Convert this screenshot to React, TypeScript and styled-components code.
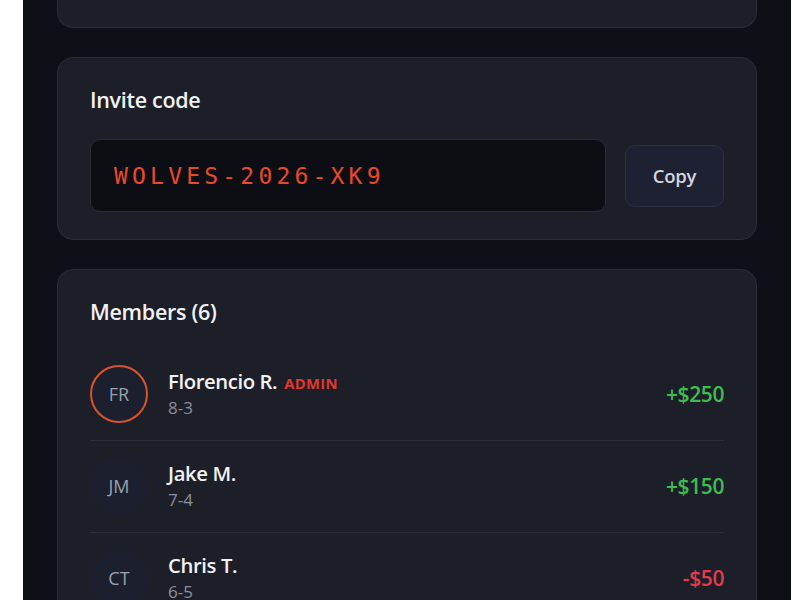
import React from 'react';
import styled, { createGlobalStyle } from 'styled-components';

const GlobalStyle = createGlobalStyle`
  html, body {
    margin: 0;
    padding: 0;
    background: #ffffff;
  }
  * {
    box-sizing: border-box;
  }
`;

const Shell = styled.div`
  margin-left: 23px;
  width: 768px;
  height: 600px;
  overflow: hidden;
  background: #0f1017;
  padding: 0 34px;
  display: flex;
  flex-direction: column;
  gap: 29px;
  font-family: 'Open Sans', 'Noto Sans', sans-serif;
`;

const Card = styled.section`
  background: #1d1f28;
  border: 1px solid #2a2d38;
  border-radius: 16px;
  padding: 29px 32px 27px;
  flex-shrink: 0;
`;

const CutCard = styled(Card)`
  height: 28px;
  padding: 0;
  border-top: none;
  border-radius: 0 0 16px 16px;
`;

const CardTitle = styled.h2`
  margin: 0;
  font-size: 21.5px;
  line-height: 26px;
  font-weight: 600;
  color: #f1f2f5;
  letter-spacing: -0.3px;
`;

const CodeRow = styled.div`
  margin-top: 26px;
  display: flex;
  align-items: center;
  gap: 19px;
`;

const CodeField = styled.div`
  flex: 1;
  height: 73px;
  display: flex;
  align-items: center;
  padding-left: 23px;
  background: #0d0e14;
  border: 1px solid #2a2d38;
  border-radius: 10px;
  font-family: 'DejaVu Sans Mono', 'Liberation Mono', monospace;
  font-size: 23px;
  letter-spacing: 4.2px;
  color: #e8482f;
`;

const CopyButton = styled.button`
  width: 99px;
  height: 62px;
  background: #1e2132;
  border: 1px solid #2c3040;
  border-radius: 10px;
  color: #d3d6de;
  font-family: inherit;
  font-size: 18.5px;
  font-weight: 600;
  letter-spacing: -0.2px;
  cursor: pointer;
`;

const MemberList = styled.div`
  margin-top: 24px;
  display: flex;
  flex-direction: column;
`;

const MemberRow = styled.div`
  display: flex;
  align-items: center;
  padding: 16px 0 17px;
  border-bottom: 1px solid #2c2f3a;

  &:last-child {
    border-bottom: none;
  }
`;

const Avatar = styled.div<{ $admin?: boolean }>`
  width: 58px;
  height: 58px;
  border-radius: 50%;
  flex-shrink: 0;
  display: flex;
  align-items: center;
  justify-content: center;
  background: #1c1f2e;
  border: 2px solid ${(p) => (p.$admin ? '#d9532b' : '#1c1f2e')};
  color: #9aa0ae;
  font-size: 18px;
  font-weight: 500;
`;

const Info = styled.div`
  margin-left: 20px;
  flex: 1;
  display: flex;
  flex-direction: column;
  gap: 4px;
`;

const NameLine = styled.div`
  display: flex;
  align-items: baseline;
  gap: 7px;
`;

const Name = styled.span`
  font-size: 20.3px;
  line-height: 24px;
  font-weight: 600;
  color: #f1f2f5;
  letter-spacing: -0.4px;
`;

const Badge = styled.span`
  font-size: 14.8px;
  font-weight: 700;
  color: #e0392b;
  letter-spacing: 0.3px;
`;

const Record = styled.span`
  font-size: 17px;
  line-height: 22px;
  color: #8a8f9c;
`;

const Amount = styled.span<{ $negative?: boolean }>`
  font-size: 21px;
  font-weight: 600;
  letter-spacing: -0.4px;
  color: ${(p) => (p.$negative ? '#e23a4c' : '#3dbd4f')};
`;

interface Member {
  initials: string;
  name: string;
  record: string;
  amount: number;
  admin?: boolean;
}

const members: Member[] = [
  { initials: 'FR', name: 'Florencio R.', record: '8-3', amount: 250, admin: true },
  { initials: 'JM', name: 'Jake M.', record: '7-4', amount: 150 },
  { initials: 'CT', name: 'Chris T.', record: '6-5', amount: -50 },
  { initials: 'DL', name: 'Dan L.', record: '5-6', amount: -100 },
];

const formatAmount = (n: number) => (n >= 0 ? `+$${n}` : `-$${Math.abs(n)}`);

const App: React.FC = () => {
  return (
    <>
      <GlobalStyle />
      <Shell>
        <CutCard />
        <Card>
          <CardTitle>Invite code</CardTitle>
          <CodeRow>
            <CodeField>WOLVES-2026-XK9</CodeField>
            <CopyButton>Copy</CopyButton>
          </CodeRow>
        </Card>
        <Card>
          <CardTitle>Members (6)</CardTitle>
          <MemberList>
            {members.map((m) => (
              <MemberRow key={m.initials}>
                <Avatar $admin={m.admin}>{m.initials}</Avatar>
                <Info>
                  <NameLine>
                    <Name>{m.name}</Name>
                    {m.admin && <Badge>ADMIN</Badge>}
                  </NameLine>
                  <Record>{m.record}</Record>
                </Info>
                <Amount $negative={m.amount < 0}>{formatAmount(m.amount)}</Amount>
              </MemberRow>
            ))}
          </MemberList>
        </Card>
      </Shell>
    </>
  );
};

export default App;
